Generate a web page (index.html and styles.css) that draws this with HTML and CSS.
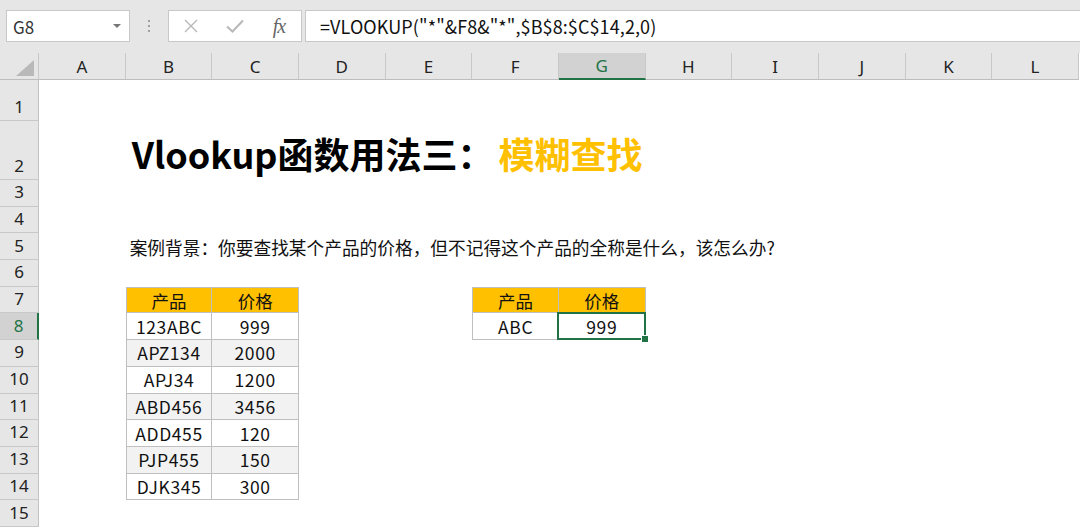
FILE: index.html
```html
<!DOCTYPE html>
<html lang="zh-CN">
<head>
<meta charset="utf-8">
<title>Vlookup</title>
<link rel="stylesheet" href="styles.css">
</head>
<body>
<div class="app">
  <div class="fbar">
    <div class="namebox"><span>G8</span><span class="caret"></span></div>
    <div class="grip"><i></i><i></i><i></i></div>
    <div class="fxbox">
      <span class="fxbtn"><svg width="16" height="16" viewBox="0 0 16 16"><path d="M2 2L14 14M14 2L2 14" stroke="#b8b8b8" stroke-width="1.4" fill="none"/></svg></span>
      <span class="fxbtn"><svg width="18" height="14" viewBox="0 0 18 14"><path d="M1 7.5L6.5 12.5L17 1.5" stroke="#b8b8b8" stroke-width="2" fill="none"/></svg></span>
      <span class="fxbtn fx">fx</span>
    </div>
    <div class="formula">=VLOOKUP("*"&amp;F8&amp;"*",$B$8:$C$14,2,0)</div>
  </div>

  <div class="sheet">
    <div class="corner"><svg width="18" height="16" viewBox="0 0 18 16"><path d="M18 0L18 16L0 16Z" fill="#b9b9b9"/></svg></div>
    <div class="ch">A</div><div class="ch">B</div><div class="ch">C</div><div class="ch">D</div>
    <div class="ch">E</div><div class="ch">F</div><div class="ch ch-sel">G</div><div class="ch">H</div>
    <div class="ch">I</div><div class="ch">J</div><div class="ch">K</div><div class="ch">L</div>

    <div class="rh">1</div><div class="span12"></div>

    <div class="rh">2</div><div class="span1"></div>
    <div class="title span11">Vlookup函数用法三：<span class="hl">模糊查找</span></div>

    <div class="rh">3</div><div class="span12"></div>
    <div class="rh">4</div><div class="span12"></div>

    <div class="rh">5</div><div class="span1"></div>
    <div class="note span11">案例背景：你要查找某个产品的价格，但不记得这个产品的全称是什么，该怎么办?</div>

    <div class="rh">6</div><div class="span12"></div>

    <div class="rh">7</div><div class="span1"></div>
    <div class="t l th">产品</div><div class="t th">价格</div>
    <div class="span2"></div>
    <div class="t l th">产品</div><div class="t th">价格</div>
    <div class="span5"></div>

    <div class="rh rh-sel">8</div><div class="span1"></div>
    <div class="t l">123ABC</div><div class="t">999</div>
    <div class="span2"></div>
    <div class="t l">ABC</div><div class="t sel">999</div>
    <div class="span5"></div>

    <div class="rh">9</div><div class="span1"></div>
    <div class="t l alt">APZ134</div><div class="t alt">2000</div><div class="span9"></div>

    <div class="rh">10</div><div class="span1"></div>
    <div class="t l">APJ34</div><div class="t">1200</div><div class="span9"></div>

    <div class="rh">11</div><div class="span1"></div>
    <div class="t l alt">ABD456</div><div class="t alt">3456</div><div class="span9"></div>

    <div class="rh">12</div><div class="span1"></div>
    <div class="t l">ADD455</div><div class="t">120</div><div class="span9"></div>

    <div class="rh">13</div><div class="span1"></div>
    <div class="t l alt">PJP455</div><div class="t alt">150</div><div class="span9"></div>

    <div class="rh">14</div><div class="span1"></div>
    <div class="t l">DJK345</div><div class="t">300</div><div class="span9"></div>

    <div class="rh">15</div><div class="span12"></div>
  </div>
</div>
</body>
</html>
```

FILE: styles.css
```css
* { box-sizing: border-box; margin: 0; padding: 0; }
html, body { width: 1080px; height: 529px; overflow: hidden; background: #fff; }
body { font-family: "Noto Sans CJK SC", "Noto Sans", sans-serif; color: #000; }

.app { display: flex; flex-direction: column; height: 529px; }

/* formula bar */
.fbar {
  height: 53px;
  flex: none;
  background: #e6e6e6;
  display: flex;
  align-items: flex-start;
  padding: 10px 0 0 6px;
}
.namebox {
  width: 124px; height: 32px;
  background: #fff; border: 1px solid #c8c8c8;
  display: flex; align-items: center; justify-content: space-between;
  padding: 0 8px 0 6px;
  font-size: 17px; color: #333;
}
.caret {
  width: 0; height: 0;
  border-left: 4px solid transparent; border-right: 4px solid transparent;
  border-top: 4px solid #777;
}
.grip {
  width: 38px; height: 32px;
  display: flex; flex-direction: column; align-items: center; justify-content: center; gap: 3px;
}
.grip i { display: block; width: 2px; height: 2px; background: #a0a0a0; }
.fxbox {
  width: 134px; height: 32px;
  background: #fff; border: 1px solid #c8c8c8;
  display: flex; align-items: center;
}
.fxbtn { width: 44px; display: flex; justify-content: center; align-items: center; }
.fx {
  font-family: "Liberation Serif", serif; font-style: italic;
  font-size: 20px; color: #666; letter-spacing: -1px;
}
.formula {
  flex: 1; height: 32px; margin-left: 3px;
  background: #fff; border: 1px solid #c8c8c8; border-right: none;
  display: flex; align-items: center; padding-left: 14px;
  font-size: 18px; letter-spacing: 0.1px; color: #111; white-space: nowrap;
}

/* sheet */
.sheet {
  flex: 1;
  display: grid;
  grid-template-columns: 39px repeat(12, 86.67px);
  grid-template-rows: 27px 41px 59px repeat(13, 26.7px);
  background: #fff;
}
.corner {
  background: #e6e6e6;
  border-right: 1px solid #c8c8c8; border-bottom: 1px solid #bdbdbd;
  display: flex; align-items: flex-end; justify-content: flex-end;
  padding: 0 4px 3px 0;
}
.ch {
  background: #e6e6e6;
  border-right: 1px solid #c8c8c8; border-bottom: 1px solid #bdbdbd;
  display: flex; align-items: center; justify-content: center;
  font-family: "Noto Sans", sans-serif; font-size: 17px; color: #222;
}
.ch-sel { background: #d2d2d2; color: #217346; border-bottom: 2px solid #217346; }
.rh {
  background: #e6e6e6;
  border-right: 1px solid #c3c3c3; border-bottom: 1px solid #c8c8c8;
  display: flex; align-items: flex-end; justify-content: center;
  padding-bottom: 3px;
  font-family: "Noto Sans", sans-serif; font-size: 17px; color: #222; line-height: 1.2;
}
.rh-sel { background: #d2d2d2; color: #217346; border-right: 2px solid #217346; }

.span1 { grid-column: span 1; }
.span2 { grid-column: span 2; }
.span5 { grid-column: span 5; }
.span9 { grid-column: span 9; }
.span11 { grid-column: span 11; }
.span12 { grid-column: span 12; }

.title {
  display: flex; align-items: flex-end;
  padding: 0 0 5px 6px;
  font-size: 36px; font-weight: 700; line-height: 1.2; white-space: nowrap;
  color: #000;
}
.title .hl { color: #ffc000; margin-left: 5px; }

.note {
  display: flex; align-items: center;
  padding-left: 4px;
  font-size: 17.7px; white-space: nowrap; color: #111;
}

.t {
  display: flex; align-items: center; justify-content: center;
  font-size: 17.5px; letter-spacing: 0.6px; color: #111; white-space: nowrap;
  border-right: 1px solid #bfbfbf; border-bottom: 1px solid #bfbfbf;
  background: #fff;
}
.t.l { border-left: 1px solid #bfbfbf; }
.t.th { background: #ffc000; border-top: 1px solid #bfbfbf; letter-spacing: 0; }
.t.alt { background: #f2f2f2; }
.t.sel { position: relative; }
.t.sel::after {
  content: ""; position: absolute;
  left: -2px; top: -1px; right: -1px; bottom: -1px;
  border: 2px solid #217346;
}
.t.sel::before {
  content: ""; position: absolute; z-index: 1;
  right: -4px; bottom: -4px; width: 6px; height: 6px;
  background: #217346; border: 1px solid #fff;
}
```
